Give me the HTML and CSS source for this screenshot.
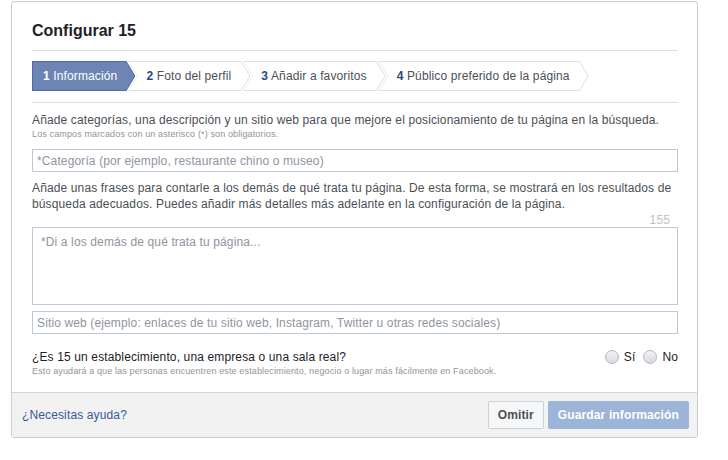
FILE: index.html
```html
<!DOCTYPE html>
<html lang="es">
<head>
  <meta charset="UTF-8" />
  <title>Configurar 15</title>
  <link rel="stylesheet" href="styles.css">
</head>
<body>
  <div class="dialogo">
    <div class="contenido">
      <h1 class="titulo">Configurar 15</h1>

      <div class="pasos">
        <div class="paso activo"><span><b>1</b> Información</span></div>
        <div class="paso"><span><b>2</b> Foto del perfil</span></div>
        <div class="paso"><span><b>3</b> Añadir a favoritos</span></div>
        <div class="paso"><span><b>4</b> Público preferido de la página</span></div>
      </div>

      <p class="texto">Añade categorías, una descripción y un sitio web para que mejore el posicionamiento de tu página en la búsqueda.</p>
      <p class="nota">Los campos marcados con un asterisco (*) son obligatorios.</p>
      <input class="campo" type="text" placeholder="*Categoría (por ejemplo, restaurante chino o museo)">

      <p class="texto parrafo">Añade unas frases para contarle a los demás de qué trata tu página. De esta forma, se mostrará en los resultados de búsqueda adecuados. Puedes añadir más detalles más adelante en la configuración de la página.</p>
      <div class="contador">155</div>
      <textarea class="area" placeholder="*Di a los demás de qué trata tu página..."></textarea>
      <input class="campo web" type="text" placeholder="Sitio web (ejemplo: enlaces de tu sitio web, Instagram, Twitter u otras redes sociales)">

      <div class="pregunta">
        <div>
          <div class="pregunta-texto">¿Es 15 un establecimiento, una empresa o una sala real?</div>
          <div class="nota">Esto ayudará a que las personas encuentren este establecimiento, negocio o lugar más fácilmente en Facebook.</div>
        </div>
        <div class="opciones">
          <label><span class="radio"></span>Sí</label>
          <label><span class="radio"></span>No</label>
        </div>
      </div>
    </div>

    <div class="pie">
      <a href="#" class="ayuda">¿Necesitas ayuda?</a>
      <div class="botones">
        <button class="btn omitir">Omitir</button>
        <button class="btn guardar">Guardar información</button>
      </div>
    </div>
  </div>
</body>
</html>
```

FILE: styles.css
```css
body {
  font-family: "Liberation Sans", Arial, sans-serif;
  letter-spacing: 0.13px;
  background-color: white;
  color: #4b4f56;
  margin: 0;
  padding: 1px 0 0 11px;
}
.dialogo {
  width: 687px;
  box-sizing: border-box;
  border: 1px solid #c9ccd1;
  border-radius: 3px;
  overflow: hidden;
}
.contenido {
  padding: 0 19px 0 20px;
}
.titulo {
  margin: 0;
  padding: 19px 0 9px;
  font-size: 16px;
  line-height: 20px;
  letter-spacing: 0;
  color: #1d2129;
  border-bottom: 1px solid #dddfe2;
}

/* Pasos */
.pasos {
  display: flex;
  margin-top: 10px;
  padding-bottom: 11px;
  border-bottom: 1px solid #dddfe2;
}
.paso {
  position: relative;
  height: 30px;
  display: flex;
  align-items: center;
  padding: 0 19px 0 18px;
  margin-left: -7px;
  font-size: 12px;
  color: #4b4f56;
  background-color: #dddfe2;
  clip-path: polygon(0 0, calc(100% - 9px) 0, 100% 50%, calc(100% - 9px) 100%, 0 100%, 9px 50%);
}
.paso::before {
  content: '';
  position: absolute;
  top: 1px;
  bottom: 1px;
  left: 1px;
  right: 1px;
  background-color: white;
  clip-path: polygon(0 0, calc(100% - 8.5px) 0, 100% 50%, calc(100% - 8.5px) 100%, 0 100%, 8.5px 50%);
}
.paso span {
  position: relative;
  white-space: nowrap;
}
.paso b {
  color: #29487d;
}
.paso.activo {
  margin-left: 0;
  padding-left: 11px;
  padding-right: 18px;
  color: white;
  background-color: #4e69a2;
  clip-path: polygon(0 0, calc(100% - 9px) 0, 100% 50%, calc(100% - 9px) 100%, 0 100%);
}
.paso.activo::before {
  background-color: #6d84b4;
  clip-path: polygon(0 0, calc(100% - 8.5px) 0, 100% 50%, calc(100% - 8.5px) 100%, 0 100%);
}
.paso.activo b {
  color: white;
}

/* Formulario */
.texto {
  margin: 9px 0 0;
  font-size: 12px;
  line-height: 16px;
  color: #4b4f56;
}
.nota {
  margin: 0;
  font-size: 9px;
  line-height: 12px;
  color: #90949c;
}
.campo {
  display: block;
  width: 100%;
  box-sizing: border-box;
  height: 23px;
  margin-top: 9px;
  padding: 0 4px;
  border: 1px solid #bdc7d8;
  font-family: inherit;
  font-size: 12px;
  letter-spacing: inherit;
  color: #1d2129;
  outline: none;
}
.campo::placeholder,
.area::placeholder {
  color: #90949c;
}
.parrafo {
  margin-top: 8px;
}
.contador {
  text-align: right;
  padding-right: 8px;
  font-size: 12px;
  line-height: 14px;
  margin-top: 1px;
  color: #bec3c9;
}
.area {
  display: block;
  width: 100%;
  box-sizing: border-box;
  height: 78px;
  margin-top: 0;
  padding: 7px 8px;
  border: 1px solid #bdc7d8;
  font-family: inherit;
  font-size: 12px;
  letter-spacing: inherit;
  resize: none;
  outline: none;
}
.campo.web {
  margin-top: 6px;
}
.pregunta {
  display: flex;
  justify-content: space-between;
  margin-top: 15px;
  padding-bottom: 15px;
}
.pregunta-texto {
  font-size: 12px;
  line-height: 16px;
  color: #1d2129;
}
.opciones {
  display: flex;
  gap: 8px;
  font-size: 12px;
  line-height: 16px;
  color: #1d2129;
}
.opciones label {
  display: flex;
  align-items: center;
  height: 16px;
}
.radio {
  width: 12px;
  height: 12px;
  margin-right: 5px;
  border: 1px solid #b4b6bb;
  border-radius: 50%;
  background: linear-gradient(#f2f3f5, #d8dadf);
}

/* Pie */
.pie {
  display: flex;
  justify-content: space-between;
  align-items: center;
  padding: 8px 8px 8px 10px;
  background-color: #f2f2f2;
  border-top: 1px solid #d3d6db;
}
.ayuda {
  font-size: 12px;
  color: #365899;
  text-decoration: none;
}
.botones {
  display: flex;
  gap: 4px;
}
.btn {
  height: 28px;
  padding: 0 9px;
  border-radius: 2px;
  font-family: inherit;
  font-size: 12px;
  font-weight: bold;
  letter-spacing: inherit;
  cursor: pointer;
}
.omitir {
  background-color: #f6f7f9;
  border: 1px solid #ced0d4;
  color: #4b4f56;
}
.guardar {
  background-color: #9cb4d8;
  border: 1px solid #9cb4d8;
  color: white;
}
```
